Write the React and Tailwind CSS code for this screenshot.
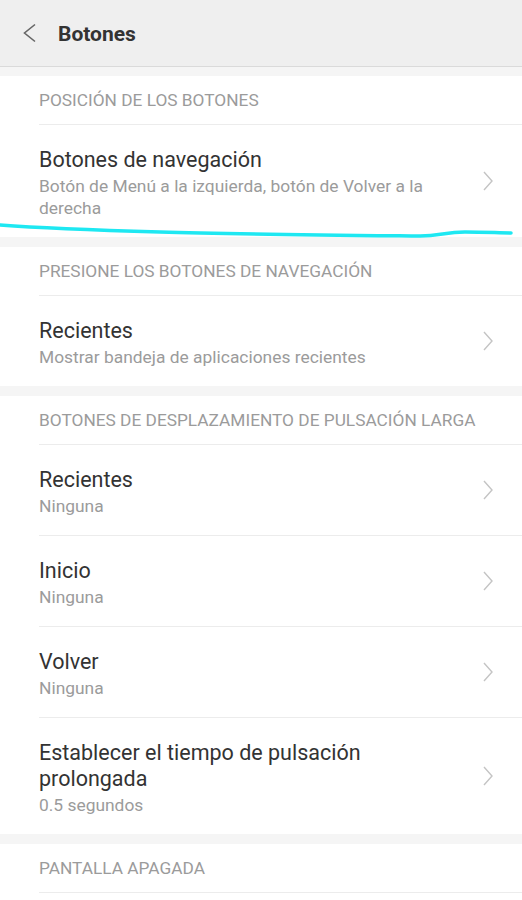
const sections = [
  {
    title: "POSICIÓN DE LOS BOTONES",
    items: [
      {
        title: "Botones de navegación",
        subtitle: "Botón de Menú a la izquierda, botón de Volver a la derecha",
      },
    ],
  },
  {
    title: "PRESIONE LOS BOTONES DE NAVEGACIÓN",
    items: [
      { title: "Recientes", subtitle: "Mostrar bandeja de aplicaciones recientes" },
    ],
  },
  {
    title: "BOTONES DE DESPLAZAMIENTO DE PULSACIÓN LARGA",
    items: [
      { title: "Recientes", subtitle: "Ninguna" },
      { title: "Inicio", subtitle: "Ninguna" },
      { title: "Volver", subtitle: "Ninguna" },
      {
        title: "Establecer el tiempo de pulsación prolongada",
        subtitle: "0.5 segundos",
      },
    ],
  },
  {
    title: "PANTALLA APAGADA",
    items: [],
  },
];

function Chevron() {
  return (
    <svg width="12" height="22" viewBox="0 0 12 22" className="shrink-0">
      <path d="M2 2 L10 11 L2 20" fill="none" stroke="#c4c4c4" strokeWidth="1.4" />
    </svg>
  );
}

function Item({ item }) {
  return (
    <div className="border-t border-[#ececec] flex items-center pr-[28px]">
      <div className="flex-1 pt-[22px] pb-[18px] pr-[50px]">
        <div className="text-[21.5px] leading-[26px] text-[#333333]">{item.title}</div>
        <div className="mt-[2px] text-[17.4px] leading-[22px] text-[#9b9b9b]">
          {item.subtitle}
        </div>
      </div>
      <Chevron />
    </div>
  );
}

function Section({ section }) {
  return (
    <section className="bg-white pl-[39px]">
      <div className="pt-[13px] pb-[13px] text-[17.3px] leading-[22px] text-[#9b9b9b]">
        {section.title}
      </div>
      {section.items.map((item, index) => (
        <Item key={index} item={item} />
      ))}
      {!section.items.length && <div className="border-t border-[#ececec] h-[8px]" />}
    </section>
  );
}

export default function App() {
  return (
    <div
      className="relative w-[522px] h-[900px] overflow-hidden bg-[#f5f5f5]"
      style={{ fontFamily: "Roboto, 'Noto Sans', sans-serif" }}
    >
      <header className="h-[67px] bg-[#efefef] border-b border-[#dadada] flex items-center pl-[22px]">
        <svg width="16" height="22" viewBox="0 0 16 22">
          <path d="M13 2.5 L2.5 11 L13 19.5" fill="none" stroke="#666666" strokeWidth="1.6" />
        </svg>
        <h1 className="ml-[20px] mt-[3px] text-[21px] font-bold text-[#333333]">Botones</h1>
      </header>

      <div className="pt-[9px] flex flex-col gap-[10px]">
        {sections.map((section, index) => (
          <Section key={index} section={section} />
        ))}
      </div>

      <svg
        className="absolute left-0 top-0 pointer-events-none"
        width="522"
        height="260"
        viewBox="0 0 522 260"
      >
        <path
          d="M0 225 C 40 228, 90 230, 160 232 S 330 235, 420 236 C 440 236, 445 232, 465 232 S 500 233, 511 233"
          fill="none"
          stroke="#1ee8f2"
          strokeWidth="3.5"
          strokeLinecap="round"
        />
      </svg>
    </div>
  );
}
